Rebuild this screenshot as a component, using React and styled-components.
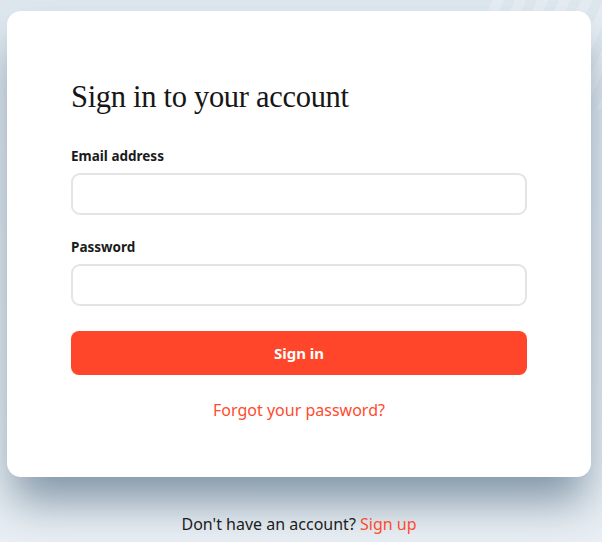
import React from "react";
import styled, { createGlobalStyle } from "styled-components";

const GlobalStyle = createGlobalStyle`
  html, body {
    margin: 0;
    padding: 0;
  }
  body {
    width: 602px;
    height: 542px;
    overflow: hidden;
    font-family: "Noto Sans", "Open Sans", sans-serif;
    background:
      repeating-linear-gradient(115deg, rgba(255,255,255,0.0) 0px, rgba(255,255,255,0.0) 10px, rgba(255,255,255,0.22) 10px, rgba(255,255,255,0.22) 20px) top right / 120px 110px no-repeat,
      linear-gradient(180deg, #dee7ee 0%, #e4ebf1 60%, #e9eff4 100%);
  }
`;

const Page = styled.div`
  display: flex;
  flex-direction: column;
  align-items: flex-start;
  padding: 11px 11px 0 7px;
`;

const Card = styled.div`
  box-sizing: border-box;
  width: 584px;
  height: 466px;
  background: #fff;
  border-radius: 14px;
  padding: 68px 64px 0 64px;
  box-shadow: 0 30px 44px -6px rgba(60, 90, 115, 0.6);
  display: flex;
  flex-direction: column;
`;

const Heading = styled.h1`
  margin: 0 0 31px;
  font-family: "Liberation Serif", "DejaVu Serif", serif;
  font-weight: 400;
  font-size: 30.5px;
  line-height: 36px;
  letter-spacing: -0.3px;
  color: #161616;
`;

const Field = styled.div`
  display: flex;
  flex-direction: column;
  gap: 7px;
  margin-bottom: ${(p) => p.$mb || 0}px;
`;

const Label = styled.label`
  font-size: 13.5px;
  line-height: 20px;
  font-weight: 700;
  color: #1b1b1b;
`;

const Input = styled.input`
  box-sizing: border-box;
  width: 456px;
  height: 42px;
  border: 2px solid #e4e4e4;
  border-radius: 9px;
  background: #fff;
  outline: none;
  font-size: 15px;
  padding: 0 12px;
`;

const Button = styled.button`
  width: 456px;
  height: 44px;
  margin-top: 25px;
  border: none;
  border-radius: 8px;
  background: #ff452a;
  color: #fff;
  font-family: inherit;
  font-size: 15px;
  font-weight: 700;
  cursor: pointer;
`;

const Forgot = styled.a`
  margin-top: 24px;
  width: 456px;
  text-align: center;
  font-size: 16px;
  line-height: 22px;
  color: #ff4a2e;
  text-decoration: none;
`;

const Footer = styled.p`
  width: 584px;
  margin: 36px 0 0;
  text-align: center;
  font-size: 16px;
  line-height: 22px;
  color: #1c1c1c;
`;

const Link = styled.a`
  color: #ff4a2e;
  text-decoration: none;
`;

export default function App() {
  return (
    <>
      <GlobalStyle />
      <Page>
        <Card>
          <Heading>Sign in to your account</Heading>
          <Field $mb={22}>
            <Label htmlFor="email">Email address</Label>
            <Input id="email" type="email" />
          </Field>
          <Field>
            <Label htmlFor="password">Password</Label>
            <Input id="password" type="password" />
          </Field>
          <Button>Sign in</Button>
          <Forgot href="#">Forgot your password?</Forgot>
        </Card>
        <Footer>
          Don't have an account? <Link href="#">Sign up</Link>
        </Footer>
      </Page>
    </>
  );
}
